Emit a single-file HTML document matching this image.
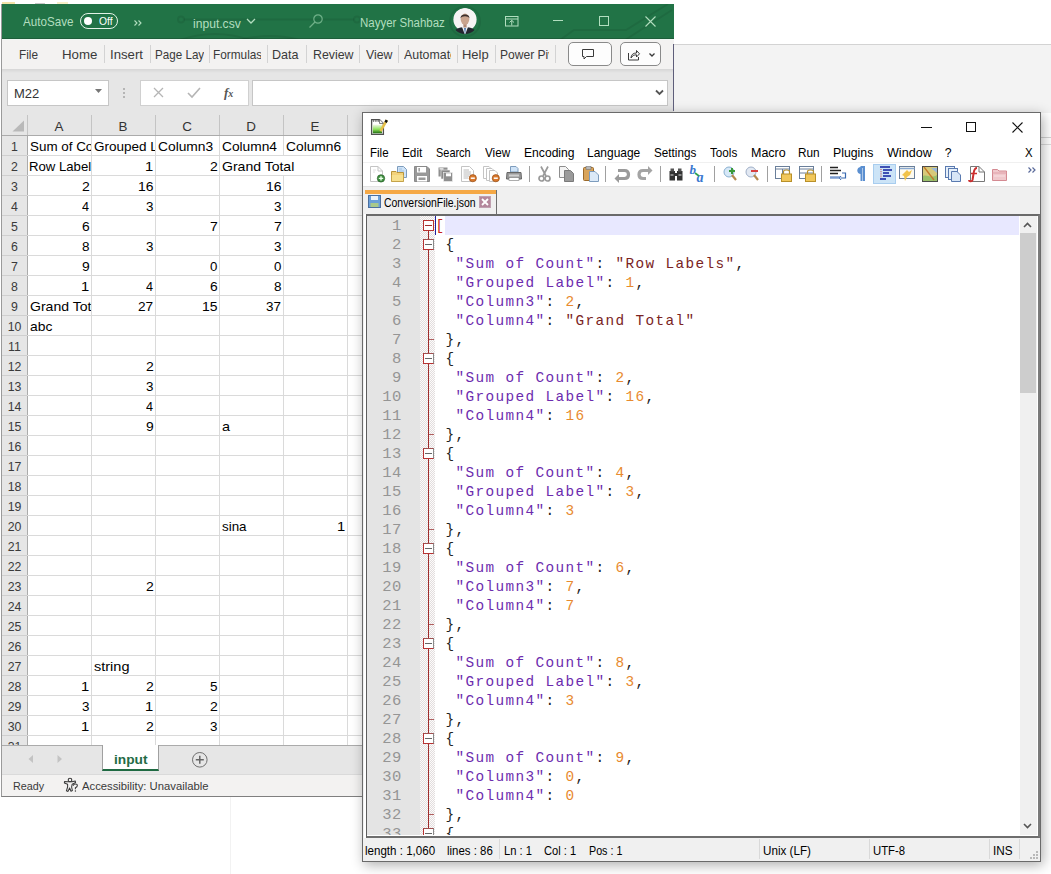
<!DOCTYPE html><html><head><meta charset="utf-8"><style>
*{box-sizing:border-box;margin:0;padding:0}
html,body{width:1051px;height:874px;overflow:hidden;background:#fff;font-family:"Liberation Sans",sans-serif;position:relative}
.a{position:absolute}
.t{position:absolute;white-space:nowrap;line-height:1}
svg{position:absolute;overflow:visible}
.cell{position:absolute;font-size:13.6px;color:#000;white-space:nowrap;line-height:20px;height:20px;overflow:hidden}
.rh{position:absolute;font-size:13.4px;color:#3a3a3a;text-align:center;line-height:20px;transform:scaleX(0.92)}
.code{position:absolute;font-family:"Liberation Mono",monospace;font-size:14.4px;letter-spacing:1.36px;line-height:19px;white-space:pre;color:#222}
.ln{position:absolute;font-family:"Liberation Mono",monospace;font-size:15.5px;letter-spacing:0.6px;line-height:19px;color:#959595;text-align:right;width:40px}
.k{color:#6c2cae}.s{color:#7a2424}.n{color:#e88a2e}
</style></head><body>
<div class="a" style="left:674px;top:44px;width:377px;height:69px;background:#f3f3f3;border-top:1px solid #d3d3d3"></div>
<div class="a" style="left:673px;top:44px;width:1px;height:67px;background:#5e5e7a;z-index:5"></div>
<div class="a" style="left:2px;top:2px;width:13px;height:2px;background:#f3e3a8"></div><div class="a" style="left:35px;top:3px;width:10px;height:1px;background:#c8c8c8"></div><div class="a" style="left:57px;top:2px;width:11px;height:2px;background:#f8f0c8"></div>
<div class="a" style="left:1041px;top:137px;width:10px;height:1px;background:#d4d4d4"></div><div class="a" style="left:1041px;top:144px;width:10px;height:1px;background:#dcdcdc"></div>
<div class="a" style="left:230px;top:797px;width:1px;height:77px;background:#f2f2f2"></div>
<div class="a" style="left:1px;top:4px;width:673px;height:793px;background:#e6e6e6;border-left:1px solid #9a9a9a;border-bottom:1px solid #7f7f7f;overflow:hidden">
<div class="a" style="left:0;top:0;width:673px;height:35px;background:#217346;border-bottom:1px solid #1d5e3a"></div>
<svg style="left:-1px;top:0" width="673" height="34" viewBox="1 4 673 34"><g fill="none" stroke="rgba(0,0,0,0.08)" stroke-width="2"><path d="M184 19.5 H354"/><circle cx="181" cy="19.5" r="3"/><circle cx="357" cy="19.5" r="3"/><circle cx="465" cy="21.5" r="15"/><path d="M560 40 L574 30 H626 L668 4"/><path d="M625 40 L672 10"/><path d="M180 40 Q215 28 250 40"/><path d="M240 40 Q270 32 300 40"/></g></svg>
<div class="t" style="left:21.00px;top:11.87px;font-size:12.2px;color:#b2debf;transform:scaleX(0.9542);transform-origin:0 0;">AutoSave</div>
<div class="a" style="left:78px;top:9px;width:38px;height:16px;border:1.5px solid #e3f2e7;border-radius:8px"></div>
<div class="a" style="left:82px;top:13px;width:8px;height:8px;border-radius:50%;background:#fff"></div>
<div class="t" style="left:96.53px;top:12.90px;font-size:10.4px;color:#ffffff;transform:scaleX(0.9955);transform-origin:0 0;">Off</div>
<svg style="left:132px;top:16px" width="9" height="6"><path d="M0.5 0.5 L3 3 L0.5 5.5 M4.5 0.5 L7 3 L4.5 5.5" fill="none" stroke="#b2debf" stroke-width="1.1"/></svg>
<div class="t" style="left:190.71px;top:13.80px;font-size:12.4px;color:#b2debf;transform:scaleX(0.9769);transform-origin:0 0;">input.csv</div>
<svg style="left:244px;top:14px" width="10" height="6"><path d="M1 1 L5 5 L9 1" fill="none" stroke="#b2debf" stroke-width="1.3"/></svg>
<svg style="left:306px;top:9px" width="16" height="16"><circle cx="10" cy="6" r="4.2" fill="none" stroke="#6fb088" stroke-width="1.2"/><path d="M7 9 L1.5 14.5" stroke="#6fb088" stroke-width="1.2"/></svg>
<div class="t" style="left:357.58px;top:12.94px;font-size:12px;color:#b2debf;transform:scaleX(0.9560);transform-origin:0 0;">Nayyer Shahbaz</div>
<svg style="left:449px;top:2px" width="28" height="30"><defs><clipPath id="av"><circle cx="14" cy="15" r="13"/></clipPath></defs><g clip-path="url(#av)"><circle cx="14" cy="13.5" r="11.6" fill="#f6f3f4"/><path d="M2 30 C2.5 23 7 21.2 14 21.2 C21 21.2 25.5 23 26 30Z" fill="#23272f"/><path d="M11 21 L14 29 L17 21Z" fill="#eef0f4"/><path d="M13.1 22 L14 29 L14.9 22Z" fill="#3e6ea8"/><rect x="12.4" y="18" width="3.2" height="3.5" fill="#b08a78"/><ellipse cx="14" cy="13.2" rx="4.3" ry="5.6" fill="#c9a48f"/><path d="M9.6 12.5 C9 7 19 7 18.4 12.5 C17.8 9.6 10.2 9.6 9.6 12.5Z" fill="#3a2e2c"/></g></svg>
<svg style="left:503px;top:12px" width="14" height="11"><rect x="0.5" y="0.5" width="12.5" height="9.5" fill="none" stroke="#b2debf" stroke-width="1"/><path d="M0.5 3 H13" stroke="#b2debf"/><path d="M6.75 9.5 V4.5 M4.5 6.5 L6.75 4.3 L9 6.5" fill="none" stroke="#b2debf"/></svg>
<div class="a" style="left:551px;top:16px;width:10px;height:1px;background:#b2debf"></div>
<div class="a" style="left:597px;top:12px;width:10px;height:10px;border:1px solid #b2debf"></div>
<svg style="left:643px;top:12px" width="11" height="11"><path d="M0.5 0.5 L10.5 10.5 M10.5 0.5 L0.5 10.5" stroke="#b2debf" stroke-width="1.1"/></svg>
<div class="a" style="left:0;top:35px;width:673px;height:30px;background:#f3f2f1;border-top:1px solid #eef8f2"></div>
<div class="a" style="left:0;top:65px;width:673px;height:4px;background:linear-gradient(#d6d6d6,#e6e6e6)"></div>
<div class="t" style="left:16.76px;top:44.67px;font-size:12.2px;color:#3a3a3a;transform:scaleX(0.9682);transform-origin:0 0;">File</div>
<div class="t" style="left:60.44px;top:44.67px;font-size:12.2px;color:#3a3a3a;transform:scaleX(1.0886);transform-origin:0 0;">Home</div>
<div class="t" style="left:108.01px;top:44.67px;font-size:12.2px;color:#3a3a3a;transform:scaleX(1.0816);transform-origin:0 0;">Insert</div>
<div class="a" style="left:0;top:0;width:202px;height:80px;overflow:hidden"><div class="t" style="left:152.87px;top:44.67px;font-size:12.2px;color:#3a3a3a;transform:scaleX(0.9552);transform-origin:0 0;">Page Layout</div></div>
<div class="a" style="left:0;top:0;width:259px;height:80px;overflow:hidden"><div class="t" style="left:211.45px;top:44.67px;font-size:12.2px;color:#3a3a3a;transform:scaleX(0.9703);transform-origin:0 0;">Formulas</div></div>
<div class="t" style="left:270.39px;top:44.67px;font-size:12.2px;color:#3a3a3a;transform:scaleX(1.0311);transform-origin:0 0;">Data</div>
<div class="t" style="left:310.61px;top:44.67px;font-size:12.2px;color:#3a3a3a;transform:scaleX(1.0143);transform-origin:0 0;">Review</div>
<div class="t" style="left:363.60px;top:44.67px;font-size:12.2px;color:#3a3a3a;transform:scaleX(1.0065);transform-origin:0 0;">View</div>
<div class="a" style="left:0;top:0;width:449px;height:80px;overflow:hidden"><div class="t" style="left:401.50px;top:44.67px;font-size:12.2px;color:#3a3a3a;transform:scaleX(1.0149);transform-origin:0 0;">Automate</div></div>
<div class="t" style="left:459.86px;top:44.67px;font-size:12.2px;color:#3a3a3a;transform:scaleX(1.0632);transform-origin:0 0;">Help</div>
<div class="a" style="left:0;top:0;width:547px;height:80px;overflow:hidden"><div class="t" style="left:497.53px;top:44.67px;font-size:12.2px;color:#3a3a3a;transform:scaleX(0.9905);transform-origin:0 0;">Power Pivot</div></div>
<div class="a" style="left:102px;top:41px;width:1px;height:18px;background:#d3d3d3"></div>
<div class="a" style="left:148px;top:41px;width:1px;height:18px;background:#d3d3d3"></div>
<div class="a" style="left:207px;top:41px;width:1px;height:18px;background:#d3d3d3"></div>
<div class="a" style="left:265px;top:41px;width:1px;height:18px;background:#d3d3d3"></div>
<div class="a" style="left:304px;top:41px;width:1px;height:18px;background:#d3d3d3"></div>
<div class="a" style="left:357px;top:41px;width:1px;height:18px;background:#d3d3d3"></div>
<div class="a" style="left:396px;top:41px;width:1px;height:18px;background:#d3d3d3"></div>
<div class="a" style="left:455px;top:41px;width:1px;height:18px;background:#d3d3d3"></div>
<div class="a" style="left:493px;top:41px;width:1px;height:18px;background:#d3d3d3"></div>
<div class="a" style="left:553px;top:41px;width:1px;height:18px;background:#d3d3d3"></div>
<div class="a" style="left:566px;top:38px;width:44px;height:24px;border:1px solid #8a8a8a;border-radius:5px;background:#fdfdfd"></div>
<svg style="left:580px;top:45px" width="12" height="11"><path d="M0.5 0.5 H11.5 V7.5 H4.5 L2 10 V7.5 H0.5Z" fill="none" stroke="#3a3a3a" stroke-width="1"/></svg>
<div class="a" style="left:618px;top:38px;width:41px;height:24px;border:1px solid #8a8a8a;border-radius:5px;background:#fdfdfd"></div>
<svg style="left:625px;top:44px" width="30" height="13"><path d="M1.5 5 V12 H11.5 V9" fill="none" stroke="#3a3a3a"/><path d="M4 10 C4 6.5 6.5 5 9.5 5 V2.5 L12.5 5.8 L9.5 9 V6.8 C7 6.8 5.3 7.8 4 10Z" fill="none" stroke="#3a3a3a" stroke-linejoin="round"/><path d="M22.5 5.5 L25 8 L27.5 5.5" fill="none" stroke="#3a3a3a" stroke-width="1.3"/></svg>
<div class="a" style="left:5px;top:76px;width:102px;height:26px;background:#fff;border:1px solid #c6c6c6"></div>
<div class="t" style="left:12px;top:83px;font-size:13px;color:#333">M22</div>
<svg style="left:93px;top:85px" width="8" height="5"><path d="M0 0 H7 L3.5 4Z" fill="#777"/></svg>
<div class="a" style="left:121px;top:84px;width:2px;height:2px;background:#b5b5b5"></div>
<div class="a" style="left:121px;top:88px;width:2px;height:2px;background:#b5b5b5"></div>
<div class="a" style="left:121px;top:92px;width:2px;height:2px;background:#b5b5b5"></div>
<div class="a" style="left:138px;top:76px;width:109px;height:26px;background:#fff;border:1px solid #d0d0d0"></div>
<svg style="left:151px;top:83px" width="11" height="11"><path d="M1 1 L10 10 M10 1 L1 10" stroke="#b5b5b5" stroke-width="1.3"/></svg>
<svg style="left:185px;top:83px" width="14" height="12"><path d="M1 6 L5 10 L13 1" fill="none" stroke="#b5b5b5" stroke-width="1.6"/></svg>
<div class="t" style="left:222px;top:82px;font-size:13px;color:#555;font-family:'Liberation Serif',serif;font-style:italic;font-weight:bold">f<span style="font-size:10px">x</span></div>
<div class="a" style="left:250px;top:76px;width:416px;height:26px;background:#fff;border:1px solid #c6c6c6"></div>
<svg style="left:653px;top:85px" width="10" height="7"><path d="M1 1.5 L4.5 5 L8 1.5" fill="none" stroke="#555" stroke-width="1.8"/></svg>
<div class="a" style="left:0;top:109px;width:673px;height:23px;background:#e6e6e6;border-bottom:1px solid #ababab"></div>
<svg style="left:10px;top:116px" width="13" height="12"><path d="M12 0.5 V11.5 H0.5Z" fill="#b9b9b9"/></svg>
<div class="t" style="left:25px;top:116px;width:64px;text-align:center;font-size:13.4px;color:#333">A</div>
<div class="t" style="left:89px;top:116px;width:64px;text-align:center;font-size:13.4px;color:#333">B</div>
<div class="t" style="left:153px;top:116px;width:64px;text-align:center;font-size:13.4px;color:#333">C</div>
<div class="t" style="left:217px;top:116px;width:64px;text-align:center;font-size:13.4px;color:#333">D</div>
<div class="t" style="left:281px;top:116px;width:64px;text-align:center;font-size:13.4px;color:#333">E</div>
<div class="t" style="left:345px;top:116px;width:64px;text-align:center;font-size:13.4px;color:#333">F</div>
<div class="a" style="left:25px;top:111px;width:1px;height:20px;background:#c4c4c4"></div>
<div class="a" style="left:89px;top:111px;width:1px;height:20px;background:#c4c4c4"></div>
<div class="a" style="left:153px;top:111px;width:1px;height:20px;background:#c4c4c4"></div>
<div class="a" style="left:217px;top:111px;width:1px;height:20px;background:#c4c4c4"></div>
<div class="a" style="left:281px;top:111px;width:1px;height:20px;background:#c4c4c4"></div>
<div class="a" style="left:345px;top:111px;width:1px;height:20px;background:#c4c4c4"></div>
<div class="a" style="left:409px;top:111px;width:1px;height:20px;background:#c4c4c4"></div>
<div class="a" style="left:25px;top:132px;width:650px;height:609px;background:#fff"></div>
<div class="a" style="left:0;top:132px;width:26px;height:609px;background:#e6e6e6;border-right:1px solid #ababab"></div>
<div class="rh" style="left:0;top:133px;width:25px;height:20px">1</div>
<div class="a" style="left:0;top:151px;width:25px;height:1px;background:#cfcfcf"></div>
<div class="a" style="left:25px;top:151px;width:650px;height:1px;background:#dadada"></div>
<div class="rh" style="left:0;top:153px;width:25px;height:20px">2</div>
<div class="a" style="left:0;top:171px;width:25px;height:1px;background:#cfcfcf"></div>
<div class="a" style="left:25px;top:171px;width:650px;height:1px;background:#dadada"></div>
<div class="rh" style="left:0;top:173px;width:25px;height:20px">3</div>
<div class="a" style="left:0;top:191px;width:25px;height:1px;background:#cfcfcf"></div>
<div class="a" style="left:25px;top:191px;width:650px;height:1px;background:#dadada"></div>
<div class="rh" style="left:0;top:193px;width:25px;height:20px">4</div>
<div class="a" style="left:0;top:211px;width:25px;height:1px;background:#cfcfcf"></div>
<div class="a" style="left:25px;top:211px;width:650px;height:1px;background:#dadada"></div>
<div class="rh" style="left:0;top:213px;width:25px;height:20px">5</div>
<div class="a" style="left:0;top:231px;width:25px;height:1px;background:#cfcfcf"></div>
<div class="a" style="left:25px;top:231px;width:650px;height:1px;background:#dadada"></div>
<div class="rh" style="left:0;top:233px;width:25px;height:20px">6</div>
<div class="a" style="left:0;top:251px;width:25px;height:1px;background:#cfcfcf"></div>
<div class="a" style="left:25px;top:251px;width:650px;height:1px;background:#dadada"></div>
<div class="rh" style="left:0;top:253px;width:25px;height:20px">7</div>
<div class="a" style="left:0;top:271px;width:25px;height:1px;background:#cfcfcf"></div>
<div class="a" style="left:25px;top:271px;width:650px;height:1px;background:#dadada"></div>
<div class="rh" style="left:0;top:273px;width:25px;height:20px">8</div>
<div class="a" style="left:0;top:291px;width:25px;height:1px;background:#cfcfcf"></div>
<div class="a" style="left:25px;top:291px;width:650px;height:1px;background:#dadada"></div>
<div class="rh" style="left:0;top:293px;width:25px;height:20px">9</div>
<div class="a" style="left:0;top:311px;width:25px;height:1px;background:#cfcfcf"></div>
<div class="a" style="left:25px;top:311px;width:650px;height:1px;background:#dadada"></div>
<div class="rh" style="left:0;top:313px;width:25px;height:20px">10</div>
<div class="a" style="left:0;top:331px;width:25px;height:1px;background:#cfcfcf"></div>
<div class="a" style="left:25px;top:331px;width:650px;height:1px;background:#dadada"></div>
<div class="rh" style="left:0;top:333px;width:25px;height:20px">11</div>
<div class="a" style="left:0;top:351px;width:25px;height:1px;background:#cfcfcf"></div>
<div class="a" style="left:25px;top:351px;width:650px;height:1px;background:#dadada"></div>
<div class="rh" style="left:0;top:353px;width:25px;height:20px">12</div>
<div class="a" style="left:0;top:371px;width:25px;height:1px;background:#cfcfcf"></div>
<div class="a" style="left:25px;top:371px;width:650px;height:1px;background:#dadada"></div>
<div class="rh" style="left:0;top:373px;width:25px;height:20px">13</div>
<div class="a" style="left:0;top:391px;width:25px;height:1px;background:#cfcfcf"></div>
<div class="a" style="left:25px;top:391px;width:650px;height:1px;background:#dadada"></div>
<div class="rh" style="left:0;top:393px;width:25px;height:20px">14</div>
<div class="a" style="left:0;top:411px;width:25px;height:1px;background:#cfcfcf"></div>
<div class="a" style="left:25px;top:411px;width:650px;height:1px;background:#dadada"></div>
<div class="rh" style="left:0;top:413px;width:25px;height:20px">15</div>
<div class="a" style="left:0;top:431px;width:25px;height:1px;background:#cfcfcf"></div>
<div class="a" style="left:25px;top:431px;width:650px;height:1px;background:#dadada"></div>
<div class="rh" style="left:0;top:433px;width:25px;height:20px">16</div>
<div class="a" style="left:0;top:451px;width:25px;height:1px;background:#cfcfcf"></div>
<div class="a" style="left:25px;top:451px;width:650px;height:1px;background:#dadada"></div>
<div class="rh" style="left:0;top:453px;width:25px;height:20px">17</div>
<div class="a" style="left:0;top:471px;width:25px;height:1px;background:#cfcfcf"></div>
<div class="a" style="left:25px;top:471px;width:650px;height:1px;background:#dadada"></div>
<div class="rh" style="left:0;top:473px;width:25px;height:20px">18</div>
<div class="a" style="left:0;top:491px;width:25px;height:1px;background:#cfcfcf"></div>
<div class="a" style="left:25px;top:491px;width:650px;height:1px;background:#dadada"></div>
<div class="rh" style="left:0;top:493px;width:25px;height:20px">19</div>
<div class="a" style="left:0;top:511px;width:25px;height:1px;background:#cfcfcf"></div>
<div class="a" style="left:25px;top:511px;width:650px;height:1px;background:#dadada"></div>
<div class="rh" style="left:0;top:513px;width:25px;height:20px">20</div>
<div class="a" style="left:0;top:531px;width:25px;height:1px;background:#cfcfcf"></div>
<div class="a" style="left:25px;top:531px;width:650px;height:1px;background:#dadada"></div>
<div class="rh" style="left:0;top:533px;width:25px;height:20px">21</div>
<div class="a" style="left:0;top:551px;width:25px;height:1px;background:#cfcfcf"></div>
<div class="a" style="left:25px;top:551px;width:650px;height:1px;background:#dadada"></div>
<div class="rh" style="left:0;top:553px;width:25px;height:20px">22</div>
<div class="a" style="left:0;top:571px;width:25px;height:1px;background:#cfcfcf"></div>
<div class="a" style="left:25px;top:571px;width:650px;height:1px;background:#dadada"></div>
<div class="rh" style="left:0;top:573px;width:25px;height:20px">23</div>
<div class="a" style="left:0;top:591px;width:25px;height:1px;background:#cfcfcf"></div>
<div class="a" style="left:25px;top:591px;width:650px;height:1px;background:#dadada"></div>
<div class="rh" style="left:0;top:593px;width:25px;height:20px">24</div>
<div class="a" style="left:0;top:611px;width:25px;height:1px;background:#cfcfcf"></div>
<div class="a" style="left:25px;top:611px;width:650px;height:1px;background:#dadada"></div>
<div class="rh" style="left:0;top:613px;width:25px;height:20px">25</div>
<div class="a" style="left:0;top:631px;width:25px;height:1px;background:#cfcfcf"></div>
<div class="a" style="left:25px;top:631px;width:650px;height:1px;background:#dadada"></div>
<div class="rh" style="left:0;top:633px;width:25px;height:20px">26</div>
<div class="a" style="left:0;top:651px;width:25px;height:1px;background:#cfcfcf"></div>
<div class="a" style="left:25px;top:651px;width:650px;height:1px;background:#dadada"></div>
<div class="rh" style="left:0;top:653px;width:25px;height:20px">27</div>
<div class="a" style="left:0;top:671px;width:25px;height:1px;background:#cfcfcf"></div>
<div class="a" style="left:25px;top:671px;width:650px;height:1px;background:#dadada"></div>
<div class="rh" style="left:0;top:673px;width:25px;height:20px">28</div>
<div class="a" style="left:0;top:691px;width:25px;height:1px;background:#cfcfcf"></div>
<div class="a" style="left:25px;top:691px;width:650px;height:1px;background:#dadada"></div>
<div class="rh" style="left:0;top:693px;width:25px;height:20px">29</div>
<div class="a" style="left:0;top:711px;width:25px;height:1px;background:#cfcfcf"></div>
<div class="a" style="left:25px;top:711px;width:650px;height:1px;background:#dadada"></div>
<div class="rh" style="left:0;top:713px;width:25px;height:20px">30</div>
<div class="a" style="left:0;top:731px;width:25px;height:1px;background:#cfcfcf"></div>
<div class="a" style="left:25px;top:731px;width:650px;height:1px;background:#dadada"></div>
<div class="rh" style="left:0;top:733px;width:25px;height:20px">31</div>
<div class="a" style="left:0;top:751px;width:25px;height:1px;background:#cfcfcf"></div>
<div class="a" style="left:25px;top:751px;width:650px;height:1px;background:#dadada"></div>
<div class="a" style="left:89px;top:132px;width:1px;height:609px;background:#dadada"></div>
<div class="a" style="left:153px;top:132px;width:1px;height:609px;background:#dadada"></div>
<div class="a" style="left:217px;top:132px;width:1px;height:609px;background:#dadada"></div>
<div class="a" style="left:281px;top:132px;width:1px;height:609px;background:#dadada"></div>
<div class="a" style="left:345px;top:132px;width:1px;height:609px;background:#dadada"></div>
<div class="a" style="left:409px;top:132px;width:1px;height:609px;background:#dadada"></div>
<div class="a" style="left:281px;top:152px;width:1px;height:19px;background:#fff"></div>
<div class="a" style="left:0;top:0;width:89px;height:800px;overflow:hidden"><div class="t" style="left:27.60px;top:136.33px;font-size:13.2px;color:#000;transform:scaleX(1.0163);transform-origin:0 0">Sum of Count</div></div>
<div class="a" style="left:0;top:0;width:153px;height:800px;overflow:hidden"><div class="t" style="left:91.52px;top:136.33px;font-size:13.2px;color:#000;transform:scaleX(1.0236);transform-origin:0 0">Grouped Label</div></div>
<div class="a" style="left:0;top:0;width:217px;height:800px;overflow:hidden"><div class="t" style="left:155.51px;top:136.33px;font-size:13.2px;color:#000;transform:scaleX(1.0457);transform-origin:0 0">Column3</div></div>
<div class="a" style="left:0;top:0;width:281px;height:800px;overflow:hidden"><div class="t" style="left:219.51px;top:136.33px;font-size:13.2px;color:#000;transform:scaleX(1.0417);transform-origin:0 0">Column4</div></div>
<div class="a" style="left:0;top:0;width:345px;height:800px;overflow:hidden"><div class="t" style="left:283.51px;top:136.33px;font-size:13.2px;color:#000;transform:scaleX(1.0457);transform-origin:0 0">Column6</div></div>
<div class="a" style="left:0;top:0;width:89px;height:800px;overflow:hidden"><div class="t" style="left:27.15px;top:156.33px;font-size:13.2px;color:#000;transform:scaleX(0.9976);transform-origin:0 0">Row Labels</div></div>
<div class="t" style="left:143.15px;top:156.33px;font-size:13.2px;color:#000;transform:scaleX(1.1212);transform-origin:0 0">1</div>
<div class="t" style="left:207.56px;top:156.33px;font-size:13.2px;color:#000;transform:scaleX(1.0602);transform-origin:0 0">2</div>
<div class="t" style="left:219.50px;top:156.33px;font-size:13.2px;color:#000;transform:scaleX(1.0642);transform-origin:0 0">Grand Total</div>
<div class="t" style="left:79.56px;top:176.33px;font-size:13.2px;color:#000;transform:scaleX(1.0602);transform-origin:0 0">2</div>
<div class="t" style="left:135.78px;top:176.33px;font-size:13.2px;color:#000;transform:scaleX(1.0564);transform-origin:0 0">16</div>
<div class="t" style="left:263.78px;top:176.33px;font-size:13.2px;color:#000;transform:scaleX(1.0564);transform-origin:0 0">16</div>
<div class="t" style="left:80.01px;top:196.33px;font-size:13.2px;color:#000;transform:scaleX(0.9563);transform-origin:0 0">4</div>
<div class="t" style="left:143.79px;top:196.33px;font-size:13.2px;color:#000;transform:scaleX(1.0160);transform-origin:0 0">3</div>
<div class="t" style="left:271.79px;top:196.33px;font-size:13.2px;color:#000;transform:scaleX(1.0160);transform-origin:0 0">3</div>
<div class="t" style="left:79.57px;top:216.33px;font-size:13.2px;color:#000;transform:scaleX(1.0488);transform-origin:0 0">6</div>
<div class="t" style="left:207.56px;top:216.33px;font-size:13.2px;color:#000;transform:scaleX(1.0602);transform-origin:0 0">7</div>
<div class="t" style="left:271.56px;top:216.33px;font-size:13.2px;color:#000;transform:scaleX(1.0602);transform-origin:0 0">7</div>
<div class="t" style="left:79.72px;top:236.33px;font-size:13.2px;color:#000;transform:scaleX(1.0267);transform-origin:0 0">8</div>
<div class="t" style="left:143.79px;top:236.33px;font-size:13.2px;color:#000;transform:scaleX(1.0160);transform-origin:0 0">3</div>
<div class="t" style="left:271.79px;top:236.33px;font-size:13.2px;color:#000;transform:scaleX(1.0160);transform-origin:0 0">3</div>
<div class="t" style="left:79.64px;top:256.33px;font-size:13.2px;color:#000;transform:scaleX(1.0488);transform-origin:0 0">9</div>
<div class="t" style="left:207.80px;top:256.33px;font-size:13.2px;color:#000;transform:scaleX(1.0056);transform-origin:0 0">0</div>
<div class="t" style="left:271.80px;top:256.33px;font-size:13.2px;color:#000;transform:scaleX(1.0056);transform-origin:0 0">0</div>
<div class="t" style="left:79.15px;top:276.33px;font-size:13.2px;color:#000;transform:scaleX(1.1212);transform-origin:0 0">1</div>
<div class="t" style="left:144.01px;top:276.33px;font-size:13.2px;color:#000;transform:scaleX(0.9563);transform-origin:0 0">4</div>
<div class="t" style="left:207.57px;top:276.33px;font-size:13.2px;color:#000;transform:scaleX(1.0488);transform-origin:0 0">6</div>
<div class="t" style="left:271.72px;top:276.33px;font-size:13.2px;color:#000;transform:scaleX(1.0267);transform-origin:0 0">8</div>
<div class="a" style="left:0;top:0;width:89px;height:800px;overflow:hidden"><div class="t" style="left:27.50px;top:296.33px;font-size:13.2px;color:#000;transform:scaleX(1.0642);transform-origin:0 0">Grand Total</div></div>
<div class="t" style="left:136.14px;top:296.33px;font-size:13.2px;color:#000;transform:scaleX(1.0356);transform-origin:0 0">27</div>
<div class="t" style="left:199.78px;top:296.33px;font-size:13.2px;color:#000;transform:scaleX(1.0564);transform-origin:0 0">15</div>
<div class="t" style="left:264.35px;top:296.33px;font-size:13.2px;color:#000;transform:scaleX(1.0205);transform-origin:0 0">37</div>
<div class="a" style="left:0;top:0;width:89px;height:800px;overflow:hidden"><div class="t" style="left:27.65px;top:316.33px;font-size:13.2px;color:#000;transform:scaleX(1.0510);transform-origin:0 0">abc</div></div>
<div class="t" style="left:143.56px;top:356.33px;font-size:13.2px;color:#000;transform:scaleX(1.0602);transform-origin:0 0">2</div>
<div class="t" style="left:143.79px;top:376.33px;font-size:13.2px;color:#000;transform:scaleX(1.0160);transform-origin:0 0">3</div>
<div class="t" style="left:144.01px;top:396.33px;font-size:13.2px;color:#000;transform:scaleX(0.9563);transform-origin:0 0">4</div>
<div class="t" style="left:143.64px;top:416.33px;font-size:13.2px;color:#000;transform:scaleX(1.0488);transform-origin:0 0">9</div>
<div class="a" style="left:0;top:0;width:281px;height:800px;overflow:hidden"><div class="t" style="left:219.62px;top:416.33px;font-size:13.2px;color:#000;transform:scaleX(1.0966);transform-origin:0 0">a</div></div>
<div class="a" style="left:0;top:0;width:281px;height:800px;overflow:hidden"><div class="t" style="left:219.86px;top:516.33px;font-size:13.2px;color:#000;transform:scaleX(1.0153);transform-origin:0 0">sina</div></div>
<div class="t" style="left:335.15px;top:516.33px;font-size:13.2px;color:#000;transform:scaleX(1.1212);transform-origin:0 0">1</div>
<div class="t" style="left:143.56px;top:576.33px;font-size:13.2px;color:#000;transform:scaleX(1.0602);transform-origin:0 0">2</div>
<div class="a" style="left:0;top:0;width:153px;height:800px;overflow:hidden"><div class="t" style="left:91.84px;top:656.33px;font-size:13.2px;color:#000;transform:scaleX(1.0992);transform-origin:0 0">string</div></div>
<div class="t" style="left:79.15px;top:676.33px;font-size:13.2px;color:#000;transform:scaleX(1.1212);transform-origin:0 0">1</div>
<div class="t" style="left:143.56px;top:676.33px;font-size:13.2px;color:#000;transform:scaleX(1.0602);transform-origin:0 0">2</div>
<div class="t" style="left:207.72px;top:676.33px;font-size:13.2px;color:#000;transform:scaleX(1.0267);transform-origin:0 0">5</div>
<div class="t" style="left:79.79px;top:696.33px;font-size:13.2px;color:#000;transform:scaleX(1.0160);transform-origin:0 0">3</div>
<div class="t" style="left:143.15px;top:696.33px;font-size:13.2px;color:#000;transform:scaleX(1.1212);transform-origin:0 0">1</div>
<div class="t" style="left:207.56px;top:696.33px;font-size:13.2px;color:#000;transform:scaleX(1.0602);transform-origin:0 0">2</div>
<div class="t" style="left:79.15px;top:716.33px;font-size:13.2px;color:#000;transform:scaleX(1.1212);transform-origin:0 0">1</div>
<div class="t" style="left:143.56px;top:716.33px;font-size:13.2px;color:#000;transform:scaleX(1.0602);transform-origin:0 0">2</div>
<div class="t" style="left:207.79px;top:716.33px;font-size:13.2px;color:#000;transform:scaleX(1.0160);transform-origin:0 0">3</div>
<div class="a" style="left:0;top:741px;width:673px;height:29px;background:#e6e6e6;border-top:1px solid #ababab"></div>
<svg style="left:26px;top:751px" width="6" height="9"><path d="M5 0 V8 L0.5 4Z" fill="#c3c3c3"/></svg>
<svg style="left:55px;top:751px" width="6" height="9"><path d="M0.5 0 V8 L5 4Z" fill="#c3c3c3"/></svg>
<div class="a" style="left:100px;top:741px;width:57px;height:26px;background:#fff;border-left:1px solid #a0a0a0;border-right:1px solid #a0a0a0;border-bottom:2px solid #1f6a42"></div>
<div class="t" style="left:111.61px;top:749.10px;font-size:13px;color:#236b45;font-weight:bold;transform:scaleX(1.0549);transform-origin:0 0;">input</div>
<svg style="left:189px;top:747px" width="18" height="18"><circle cx="8.8" cy="8.8" r="7.3" fill="none" stroke="#707070" stroke-width="1"/><path d="M8.8 4.8 V12.8 M4.8 8.8 H12.8" stroke="#666" stroke-width="1.5"/></svg>
<div class="a" style="left:0;top:770px;width:673px;height:22px;background:#f3f2f1;border-top:1px solid #dadada"></div>
<div class="t" style="left:10.74px;top:776.89px;font-size:11px;color:#3a3a3a;transform:scaleX(0.9803);transform-origin:0 0;">Ready</div>
<svg style="left:60px;top:772px" width="18" height="18"><circle cx="8" cy="4" r="1.8" fill="none" stroke="#3a3a3a" stroke-width="1.1"/><path d="M2.5 5.5 L6 5.8 H10 L13.2 5 L13.6 6.5 L10.2 8.2 L9.6 11 L10.4 14.5 L9 15.2 L7.6 12 L6 15.4 L4.4 14.8 L5.6 11 L5.6 8.2 L2.4 7Z" fill="none" stroke="#3a3a3a" stroke-width="1.05" stroke-linejoin="round"/><path d="M11.3 9.8 Q11.4 8 13.4 8 Q15.4 8 15.3 9.8 Q15.2 11 13.4 11.8 V13.3" fill="none" stroke="#3a3a3a" stroke-width="1.1"/><circle cx="13.4" cy="15" r="0.7" fill="#3a3a3a"/></svg>
<div class="t" style="left:80.40px;top:776.89px;font-size:11px;color:#3a3a3a;transform:scaleX(1.0241);transform-origin:0 0;">Accessibility: Unavailable</div>
</div>
<div class="a" style="left:362px;top:112px;width:679px;height:750px;background:#f0f0f0;border:1px solid #6a6a6a;box-shadow:2px 3px 12px rgba(0,0,0,.32);overflow:hidden">
<div class="a" style="left:0;top:0;width:677px;height:50px;background:#fff"></div>
<svg style="left:7px;top:5px" width="18" height="18"><defs><linearGradient id="ng" x1="0" y1="0" x2="0" y2="1"><stop offset="0" stop-color="#f4f8ea"/><stop offset="0.55" stop-color="#8ee25a"/><stop offset="1" stop-color="#1f6a10"/></linearGradient></defs><path d="M1.6 1.6 H9.5 L13.4 5.5 V16.4 H1.6Z" fill="#fff" stroke="#505050" stroke-width="1.3"/><path d="M9.5 1.6 V5.5 H13.4" fill="#f4f4f4" stroke="#666" stroke-width="0.8"/><circle cx="3.6" cy="3" r="0.8" fill="#444"/><circle cx="5.9" cy="3" r="0.8" fill="#444"/><circle cx="8.2" cy="3" r="0.8" fill="#444"/><rect x="2.8" y="6.5" width="9.2" height="8.8" fill="url(#ng)"/><path d="M16.8 2.2 L10.5 13.2" stroke="#e6c048" stroke-width="2.6"/><path d="M16.8 2.2 L15.6 4.3" stroke="#111" stroke-width="2.6"/></svg>
<div class="a" style="left:558px;top:14px;width:11px;height:1px;background:#111"></div>
<div class="a" style="left:603px;top:9px;width:10px;height:10px;border:1px solid #111"></div>
<svg style="left:649px;top:9px" width="11" height="11"><path d="M0.5 0.5 L10.5 10.5 M10.5 0.5 L0.5 10.5" stroke="#111" stroke-width="1.1"/></svg>
<div class="t" style="left:6.88px;top:33.87px;font-size:12.2px;color:#000;transform:scaleX(0.9462);transform-origin:0 0;">File</div>
<div class="t" style="left:38.76px;top:33.87px;font-size:12.2px;color:#000;transform:scaleX(0.9646);transform-origin:0 0;">Edit</div>
<div class="t" style="left:73.21px;top:33.87px;font-size:12.2px;color:#000;transform:scaleX(0.8974);transform-origin:0 0;">Search</div>
<div class="t" style="left:122.10px;top:33.87px;font-size:12.2px;color:#000;transform:scaleX(0.9607);transform-origin:0 0;">View</div>
<div class="t" style="left:160.53px;top:33.87px;font-size:12.2px;color:#000;transform:scaleX(0.9946);transform-origin:0 0;">Encoding</div>
<div class="t" style="left:223.94px;top:33.87px;font-size:12.2px;color:#000;transform:scaleX(0.9825);transform-origin:0 0;">Language</div>
<div class="t" style="left:291.07px;top:33.87px;font-size:12.2px;color:#000;transform:scaleX(0.9600);transform-origin:0 0;">Settings</div>
<div class="t" style="left:346.77px;top:33.87px;font-size:12.2px;color:#000;transform:scaleX(0.9599);transform-origin:0 0;">Tools</div>
<div class="t" style="left:387.50px;top:33.87px;font-size:12.2px;color:#000;transform:scaleX(1.0250);transform-origin:0 0;">Macro</div>
<div class="t" style="left:435.06px;top:33.87px;font-size:12.2px;color:#000;transform:scaleX(0.9672);transform-origin:0 0;">Run</div>
<div class="t" style="left:470.02px;top:33.87px;font-size:12.2px;color:#000;transform:scaleX(1.0074);transform-origin:0 0;">Plugins</div>
<div class="t" style="left:523.70px;top:33.87px;font-size:12.2px;color:#000;transform:scaleX(1.0315);transform-origin:0 0;">Window</div>
<div class="t" style="left:581.81px;top:33.87px;font-size:12.2px;color:#000;">?</div>
<div class="t" style="left:662.47px;top:33.87px;font-size:12.2px;color:#000;transform:scaleX(0.9368);transform-origin:0 0;">X</div>
<div class="a" style="left:0;top:49px;width:677px;height:25px;background:#fff;border-top:1px solid #f0f0f0;border-bottom:1px solid #e3e3e3"></div>
<svg style="left:6px;top:53px" width="16" height="16"><path d="M1.5 0.5 H9 L13.5 5 V15.5 H1.5Z" fill="#fff" stroke="#c4c4c4"/><path d="M9 0.5 V5 H13.5" fill="none" stroke="#c4c4c4"/><path d="M4 4 H7 M4 6 H6" stroke="#e0e0e0"/><circle cx="12" cy="12.4" r="3.7" fill="#3f8f3f" stroke="#2a5f2a" stroke-width="0.7"/><path d="M12 10.2 V14.6 M9.8 12.4 H14.2" stroke="#e8ffe8" stroke-width="1.4"/></svg>
<svg style="left:28px;top:53px" width="16" height="16"><path d="M6.5 0.5 H12.5 L15.5 3.5 V11.5 H6.5Z" fill="#cfe3f7" stroke="#7d9cbd"/><path d="M8 3 H11 M8 5 H13 M8 7 H13" stroke="#9fc0e0"/><path d="M0.5 5.5 H5 L6 6.5 H12.5 V15.5 H0.5Z" fill="#f3d27a" stroke="#b8943a"/><path d="M0.8 9 H12.2 V15.2 H0.8Z" fill="#f7e08f"/></svg>
<svg style="left:51px;top:53px" width="16" height="16"><path d="M0.5 0.5 H13 L15.5 3 V15.5 H0.5Z" fill="#999" stroke="#8a8a8a"/><rect x="3" y="1" width="9" height="5.5" fill="#fff"/><rect x="4.5" y="2" width="1.3" height="3.5" fill="#8c8c8c"/><rect x="3" y="10" width="10" height="5.5" fill="#fff"/><rect x="4.5" y="11.5" width="7" height="2.5" fill="#9a9a9a"/></svg>
<svg style="left:75px;top:54px" width="15" height="15"><rect x="0.5" y="0.5" width="9" height="9" fill="#8f8f8f"/><rect x="3" y="3" width="9" height="9" fill="#8a8a8a" stroke="#f4f4f4" stroke-width="0.6"/><rect x="5.5" y="5.5" width="9" height="9" fill="#8f8f8f" stroke="#f4f4f4" stroke-width="0.6"/><rect x="8" y="6.3" width="5" height="3" fill="#fff"/><rect x="1.5" y="1.3" width="4" height="1.2" fill="#fff"/></svg>
<svg style="left:98px;top:53px" width="16" height="16"><path d="M0.5 0.5 H8.5 L12.5 4.5 V15.5 H0.5Z" fill="#fff" stroke="#c4c4c4"/><path d="M2.5 4 H8 M2.5 6 H10 M2.5 8 H10 M2.5 10 H8 M2.5 12 H7" stroke="#a8a8a8" stroke-width="0.8"/><circle cx="11.8" cy="12.2" r="3.6" fill="#d9782c" stroke="#9a4f16" stroke-width="0.7"/><path d="M9.8 12.2 H13.8" stroke="#fff" stroke-width="1.5"/></svg>
<svg style="left:120px;top:53px" width="17" height="16"><path d="M0.5 0.5 H6 L8.5 3 V12.5 H0.5Z" fill="#fff" stroke="#c4c4c4"/><path d="M3.5 2.5 H9 L11.5 5 V14.5 H3.5Z" fill="#fff" stroke="#c4c4c4"/><path d="M6.5 4.5 H12 L14.5 7 V15.5 H6.5Z" fill="#fff" stroke="#c4c4c4"/><circle cx="12.8" cy="12.2" r="3.6" fill="#d9782c" stroke="#9a4f16" stroke-width="0.7"/><path d="M10.8 12.2 H14.8" stroke="#fff" stroke-width="1.5"/></svg>
<svg style="left:143px;top:53px" width="16" height="15"><path d="M4.5 0.5 H10 L12 2.5 V6 H4.5Z" fill="#cfe3f7" stroke="#7d9cbd"/><path d="M1 6.5 H15 L15.5 13 H0.5Z" fill="#9a9a9a" stroke="#666"/><rect x="3" y="8.5" width="10" height="2" fill="#d0d0d0"/><rect x="3" y="11.5" width="10" height="3" fill="#fff" stroke="#777" stroke-width="0.6"/></svg>
<svg style="left:175px;top:53px" width="13" height="16"><path d="M3 0.5 L8 10 M10 0.5 L5 10" stroke="#9a9a9a" stroke-width="1.7"/><circle cx="3.5" cy="12.5" r="2.5" fill="none" stroke="#9a9a9a" stroke-width="1.7"/><circle cx="9.5" cy="12.5" r="2.5" fill="none" stroke="#9a9a9a" stroke-width="1.7"/></svg>
<svg style="left:196px;top:53px" width="16" height="16"><path d="M0.5 0.5 H6.5 L9.5 3.5 V11.5 H0.5Z" fill="#f4f4f4" stroke="#8e8e8e"/><path d="M5.5 4.5 H11.5 L14.5 7.5 V15.5 H5.5Z" fill="#9a9a9a" stroke="#7a7a7a"/></svg>
<svg style="left:220px;top:53px" width="16" height="16"><rect x="0.5" y="1.5" width="10" height="13" rx="1" fill="#d9a45a" stroke="#9b6a2a"/><rect x="3" y="0.5" width="5" height="3" fill="#b8b8b8" stroke="#777" stroke-width="0.6"/><path d="M6.5 5.5 H12 L15.5 9 V15.5 H6.5Z" fill="#dceaf8" stroke="#7d9cbd"/></svg>
<svg style="left:251px;top:55px" width="16" height="13"><path d="M4 2.5 H10.5 C13.5 2.5 14.5 4.5 14.5 6.5 C14.5 8.5 13.5 10.5 10.5 10.5 H2" fill="none" stroke="#9a9a9a" stroke-width="3.2"/><path d="M0.5 10.5 L5 6 V15Z" fill="#9a9a9a"/></svg>
<svg style="left:275px;top:55px" width="15" height="13"><path d="M11 2.5 H5 C2 2.5 1 4.5 1 6.5 C1 8.5 2 10.5 5 10.5 H8" fill="none" stroke="#a4a4a4" stroke-width="3.2"/><path d="M14.5 2.5 L10 -2 V7Z" fill="#a4a4a4"/></svg>
<svg style="left:306px;top:55px" width="14" height="13"><rect x="0.5" y="3" width="5.5" height="9.5" fill="#333"/><rect x="8" y="3" width="5.5" height="9.5" fill="#333"/><rect x="5" y="5" width="4" height="3" fill="#333"/><rect x="1.5" y="0.5" width="3.5" height="3" fill="#555"/><rect x="9" y="0.5" width="3.5" height="3" fill="#555"/><rect x="1.5" y="6" width="3" height="2" fill="#888"/><rect x="9.5" y="6" width="3" height="2" fill="#888"/></svg>
<svg style="left:326px;top:51px" width="20" height="19"><text x="0.5" y="10" font-family="Liberation Serif" font-style="italic" font-weight="bold" font-size="13" fill="#3a78d0">b</text><text x="7.5" y="17.5" font-family="Liberation Serif" font-style="italic" font-weight="bold" font-size="14" fill="#3a78d0">a</text><path d="M6 9 L10 12" stroke="#30a050" stroke-width="1.6"/></svg>
<svg style="left:360px;top:53px" width="14" height="16"><circle cx="6" cy="6" r="5" fill="#d6e8f7" stroke="#8ab0d0"/><path d="M9 9 L13 14" stroke="#b48a50" stroke-width="2.2"/><path d="M9 2 V8 M6 5 H12" stroke="#3a9a3a" stroke-width="2"/></svg>
<svg style="left:382px;top:53px" width="14" height="16"><circle cx="6" cy="6" r="5" fill="#e2e8f2" stroke="#a0b0c8"/><path d="M9 9 L13 14" stroke="#b48a50" stroke-width="2.2"/><path d="M6 5 H13" stroke="#d84040" stroke-width="2"/></svg>
<svg style="left:412px;top:53px" width="18" height="16"><rect x="0.5" y="0.5" width="14" height="12" fill="#fff" stroke="#6a7f9a"/><path d="M0.5 3 H14.5 M7.5 3 V12.5" stroke="#6a7f9a"/><rect x="6.5" y="8" width="10" height="7.5" fill="#f1c75a" stroke="#b8902a"/><path d="M8.5 8 V5.5 C8.5 3.5 14.5 3.5 14.5 5.5 V8" fill="none" stroke="#b8902a" stroke-width="1.2"/></svg>
<svg style="left:436px;top:53px" width="18" height="16"><rect x="0.5" y="0.5" width="14" height="12" fill="#fff" stroke="#6a7f9a"/><path d="M0.5 3 H14.5 M0.5 7 H14.5" stroke="#6a7f9a"/><rect x="6.5" y="8" width="10" height="7.5" fill="#f1c75a" stroke="#b8902a"/><path d="M8.5 8 V5.5 C8.5 3.5 14.5 3.5 14.5 5.5 V8" fill="none" stroke="#b8902a" stroke-width="1.2"/></svg>
<svg style="left:467px;top:53px" width="17" height="15"><path d="M0 1.5 H8 M0 4.5 H11 M0 7.5 H8" stroke="#222" stroke-width="1.3"/><path d="M0 11.5 H10" stroke="#7a9bd0" stroke-width="2.5"/><path d="M12 7 H15.5 V12 H11" fill="none" stroke="#3a6ab0" stroke-width="1.2"/><path d="M11 10 L9.5 12 L11 14" fill="none" stroke="#3a6ab0"/></svg>
<svg style="left:493px;top:53px" width="10" height="16"><path d="M4.5 1 H9 M5.5 1 V15 M8 1 V15" stroke="#5b8fd0" stroke-width="2"/><path d="M5 1 C0 1 0 8 5 8Z" fill="#5b8fd0"/></svg>
<svg style="left:536px;top:53px" width="16" height="16"><rect x="0.5" y="0.5" width="15" height="12" fill="#fdfaf0" stroke="#6a7f9a"/><path d="M0.5 2.5 H15.5" stroke="#8aa8d0" stroke-width="1.5"/><path d="M3 9 L8 4 L10 6 L13 4 L11 9 L8 11 L6 15 L5 10Z" fill="#f1c34a"/></svg>
<svg style="left:559px;top:53px" width="16" height="16"><rect x="0.5" y="0.5" width="15" height="15" fill="#d7c97a" stroke="#4a4a4a"/><path d="M1 10 C5 8 9 13 15 9 V15 H1Z" fill="#9ac06a"/><path d="M2 1 L12 14" stroke="#c47a2a" stroke-width="1.3"/><path d="M9 2 H15 V7" fill="#9ab8d8"/></svg>
<svg style="left:582px;top:53px" width="16" height="16"><rect x="0.5" y="0.5" width="9" height="11" fill="#e6f0fa" stroke="#5a7ab0"/><rect x="3.5" y="2.5" width="9" height="11" fill="#e6f0fa" stroke="#5a7ab0"/><path d="M6.5 5.5 H12 L15.5 9 V15.5 H6.5Z" fill="#d8e6f6" stroke="#5a7ab0"/></svg>
<svg style="left:605px;top:53px" width="17" height="16"><path d="M2.5 0.5 H11 L16.5 6 V15.5 H2.5Z" fill="#fff" stroke="#777"/><path d="M11 0.5 V6 H16.5" fill="none" stroke="#777"/><path d="M9 2 C6 2 6 5 5.5 8 L4.5 14 C4 16 1 15.5 1 14" fill="none" stroke="#cc3030" stroke-width="2"/><path d="M3 7.5 H9" stroke="#cc3030" stroke-width="1.5"/></svg>
<svg style="left:629px;top:55px" width="15" height="13"><path d="M0.5 1.5 H5.5 L7 3 H14.5 V12.5 H0.5Z" fill="#f0c8cc" stroke="#d48a92"/><path d="M0.5 5 H14.5" stroke="#e0a0a8"/><path d="M2 8 H13" stroke="#f8e0e2"/></svg>
<div class="a" style="left:166px;top:53px;width:1px;height:16px;background:#a0a0a0"></div>
<div class="a" style="left:242px;top:53px;width:1px;height:16px;background:#a0a0a0"></div>
<div class="a" style="left:297px;top:53px;width:1px;height:16px;background:#a0a0a0"></div>
<div class="a" style="left:351px;top:53px;width:1px;height:16px;background:#a0a0a0"></div>
<div class="a" style="left:404px;top:53px;width:1px;height:16px;background:#a0a0a0"></div>
<div class="a" style="left:458px;top:53px;width:1px;height:16px;background:#a0a0a0"></div>
<div class="a" style="left:510px;top:51px;width:23px;height:20px;background:#cce4f7;border:1px solid #a8cdef"></div>
<svg style="left:514px;top:53px" width="16" height="16"><path d="M3 1 H13 M6 4 H15 M6 7 H12 M6 10 H14 M3 13 H9" stroke="#1020a0" stroke-width="1.6"/><path d="M4 3 V12" stroke="#c04040" stroke-width="1" stroke-dasharray="1 1.2"/></svg>
<svg style="left:665px;top:54px" width="9" height="6"><path d="M0.5 0.5 L3 3 L0.5 5.5 M4.5 0.5 L7 3 L4.5 5.5" fill="none" stroke="#5a6a9a" stroke-width="1.2"/></svg>
<div class="a" style="left:2px;top:77px;width:132px;height:24px;background:#f0f0f0;border-right:1px solid #6e6e6e"></div>
<div class="a" style="left:2px;top:77px;width:131px;height:4px;background:#f5a845"></div>
<svg style="left:5px;top:82px" width="14" height="14"><rect x="0.5" y="0.5" width="12" height="12" fill="#6a9fd8" stroke="#4a6fa0"/><rect x="3" y="1" width="7" height="4" fill="#eaf2fb"/><rect x="2.5" y="8" width="8" height="4" fill="#a9c98a"/></svg>
<div class="t" style="left:21.18px;top:83.87px;font-size:12.2px;color:#000;transform:scaleX(0.8565);transform-origin:0 0;">ConversionFile.json</div>
<svg style="left:116px;top:83px" width="12" height="12"><rect x="0" y="0" width="12" height="12" fill="#c0a0b0"/><rect x="1" y="1" width="10" height="10" fill="#b4879c"/><path d="M3 3 L9 9 M9 3 L3 9" stroke="#fff" stroke-width="1.8"/></svg>
<div class="a" style="left:1px;top:101px;width:2px;height:624px;background:#fff"></div>
<div class="a" style="left:3px;top:101px;width:674px;height:624px;background:#fff;border-top:2px solid #6a6a6a;border-left:1px solid #5e5e5e;border-right:2px solid #7a7a7a;border-bottom:2px solid #6e6e6e"></div>
<div class="a" style="left:4px;top:103px;width:53px;height:619px;background:#e4e4e4"></div>
<div class="a" style="left:57px;top:103px;width:15px;height:619px;background-color:#f6f6f6;background-image:repeating-conic-gradient(#e2dede 0 25%,#fdfbfb 0 50%);background-size:2px 2px"></div>
<div class="a" style="left:82px;top:103px;width:574px;height:19px;background:#e8e8ff"></div>
<div class="a" style="left:72px;top:103px;width:1px;height:19px;background:#2020a0"></div>
<div class="a" style="left:3px;top:103px;width:653px;height:619px;overflow:hidden">
<div class="ln" style="left:-4px;top:1px">1</div>
<div class="code" style="left:69.5px;top:1px"><span style="color:#c81e1e">[</span></div>
<div class="ln" style="left:-4px;top:20px">2</div>
<div class="code" style="left:69.5px;top:20px"> {</div>
<div class="ln" style="left:-4px;top:39px">3</div>
<div class="code" style="left:69.5px;top:39px">  <span class="k">&quot;Sum of Count&quot;</span>: <span class="s">&quot;Row Labels&quot;</span>,</div>
<div class="ln" style="left:-4px;top:58px">4</div>
<div class="code" style="left:69.5px;top:58px">  <span class="k">&quot;Grouped Label&quot;</span>: <span class="n">1</span>,</div>
<div class="ln" style="left:-4px;top:77px">5</div>
<div class="code" style="left:69.5px;top:77px">  <span class="k">&quot;Column3&quot;</span>: <span class="n">2</span>,</div>
<div class="ln" style="left:-4px;top:96px">6</div>
<div class="code" style="left:69.5px;top:96px">  <span class="k">&quot;Column4&quot;</span>: <span class="s">&quot;Grand Total&quot;</span></div>
<div class="ln" style="left:-4px;top:115px">7</div>
<div class="code" style="left:69.5px;top:115px"> },</div>
<div class="ln" style="left:-4px;top:134px">8</div>
<div class="code" style="left:69.5px;top:134px"> {</div>
<div class="ln" style="left:-4px;top:153px">9</div>
<div class="code" style="left:69.5px;top:153px">  <span class="k">&quot;Sum of Count&quot;</span>: <span class="n">2</span>,</div>
<div class="ln" style="left:-4px;top:172px">10</div>
<div class="code" style="left:69.5px;top:172px">  <span class="k">&quot;Grouped Label&quot;</span>: <span class="n">16</span>,</div>
<div class="ln" style="left:-4px;top:191px">11</div>
<div class="code" style="left:69.5px;top:191px">  <span class="k">&quot;Column4&quot;</span>: <span class="n">16</span></div>
<div class="ln" style="left:-4px;top:210px">12</div>
<div class="code" style="left:69.5px;top:210px"> },</div>
<div class="ln" style="left:-4px;top:229px">13</div>
<div class="code" style="left:69.5px;top:229px"> {</div>
<div class="ln" style="left:-4px;top:248px">14</div>
<div class="code" style="left:69.5px;top:248px">  <span class="k">&quot;Sum of Count&quot;</span>: <span class="n">4</span>,</div>
<div class="ln" style="left:-4px;top:267px">15</div>
<div class="code" style="left:69.5px;top:267px">  <span class="k">&quot;Grouped Label&quot;</span>: <span class="n">3</span>,</div>
<div class="ln" style="left:-4px;top:286px">16</div>
<div class="code" style="left:69.5px;top:286px">  <span class="k">&quot;Column4&quot;</span>: <span class="n">3</span></div>
<div class="ln" style="left:-4px;top:305px">17</div>
<div class="code" style="left:69.5px;top:305px"> },</div>
<div class="ln" style="left:-4px;top:324px">18</div>
<div class="code" style="left:69.5px;top:324px"> {</div>
<div class="ln" style="left:-4px;top:343px">19</div>
<div class="code" style="left:69.5px;top:343px">  <span class="k">&quot;Sum of Count&quot;</span>: <span class="n">6</span>,</div>
<div class="ln" style="left:-4px;top:362px">20</div>
<div class="code" style="left:69.5px;top:362px">  <span class="k">&quot;Column3&quot;</span>: <span class="n">7</span>,</div>
<div class="ln" style="left:-4px;top:381px">21</div>
<div class="code" style="left:69.5px;top:381px">  <span class="k">&quot;Column4&quot;</span>: <span class="n">7</span></div>
<div class="ln" style="left:-4px;top:400px">22</div>
<div class="code" style="left:69.5px;top:400px"> },</div>
<div class="ln" style="left:-4px;top:419px">23</div>
<div class="code" style="left:69.5px;top:419px"> {</div>
<div class="ln" style="left:-4px;top:438px">24</div>
<div class="code" style="left:69.5px;top:438px">  <span class="k">&quot;Sum of Count&quot;</span>: <span class="n">8</span>,</div>
<div class="ln" style="left:-4px;top:457px">25</div>
<div class="code" style="left:69.5px;top:457px">  <span class="k">&quot;Grouped Label&quot;</span>: <span class="n">3</span>,</div>
<div class="ln" style="left:-4px;top:476px">26</div>
<div class="code" style="left:69.5px;top:476px">  <span class="k">&quot;Column4&quot;</span>: <span class="n">3</span></div>
<div class="ln" style="left:-4px;top:495px">27</div>
<div class="code" style="left:69.5px;top:495px"> },</div>
<div class="ln" style="left:-4px;top:514px">28</div>
<div class="code" style="left:69.5px;top:514px"> {</div>
<div class="ln" style="left:-4px;top:533px">29</div>
<div class="code" style="left:69.5px;top:533px">  <span class="k">&quot;Sum of Count&quot;</span>: <span class="n">9</span>,</div>
<div class="ln" style="left:-4px;top:552px">30</div>
<div class="code" style="left:69.5px;top:552px">  <span class="k">&quot;Column3&quot;</span>: <span class="n">0</span>,</div>
<div class="ln" style="left:-4px;top:571px">31</div>
<div class="code" style="left:69.5px;top:571px">  <span class="k">&quot;Column4&quot;</span>: <span class="n">0</span></div>
<div class="ln" style="left:-4px;top:590px">32</div>
<div class="code" style="left:69.5px;top:590px"> },</div>
<div class="ln" style="left:-4px;top:609px">33</div>
<div class="code" style="left:69.5px;top:609px"> {</div>
<div class="a" style="left:62px;top:14px;width:1px;height:620px;background:#a02c2c"></div>
<div class="a" style="left:57px;top:4px;width:11px;height:11px;background:#fff;border:1px solid #b83232;"></div>
<div class="a" style="left:59px;top:9px;width:7px;height:1px;background:#a02a2a"></div>
<div class="a" style="left:57px;top:23px;width:11px;height:11px;background:#fff;border:1px solid #b83232;border-right-color:#8a8a8a;border-top-color:#a05050;"></div>
<div class="a" style="left:59px;top:28px;width:7px;height:1px;background:#666"></div>
<div class="a" style="left:63px;top:123px;width:5px;height:1px;background:#b06060"></div>
<div class="a" style="left:57px;top:137px;width:11px;height:11px;background:#fff;border:1px solid #b83232;border-right-color:#8a8a8a;border-top-color:#a05050;"></div>
<div class="a" style="left:59px;top:142px;width:7px;height:1px;background:#666"></div>
<div class="a" style="left:63px;top:218px;width:5px;height:1px;background:#b06060"></div>
<div class="a" style="left:57px;top:232px;width:11px;height:11px;background:#fff;border:1px solid #b83232;border-right-color:#8a8a8a;border-top-color:#a05050;"></div>
<div class="a" style="left:59px;top:237px;width:7px;height:1px;background:#666"></div>
<div class="a" style="left:63px;top:313px;width:5px;height:1px;background:#b06060"></div>
<div class="a" style="left:57px;top:327px;width:11px;height:11px;background:#fff;border:1px solid #b83232;border-right-color:#8a8a8a;border-top-color:#a05050;"></div>
<div class="a" style="left:59px;top:332px;width:7px;height:1px;background:#666"></div>
<div class="a" style="left:63px;top:408px;width:5px;height:1px;background:#b06060"></div>
<div class="a" style="left:57px;top:422px;width:11px;height:11px;background:#fff;border:1px solid #b83232;border-right-color:#8a8a8a;border-top-color:#a05050;"></div>
<div class="a" style="left:59px;top:427px;width:7px;height:1px;background:#666"></div>
<div class="a" style="left:63px;top:503px;width:5px;height:1px;background:#b06060"></div>
<div class="a" style="left:57px;top:517px;width:11px;height:11px;background:#fff;border:1px solid #b83232;border-right-color:#8a8a8a;border-top-color:#a05050;"></div>
<div class="a" style="left:59px;top:522px;width:7px;height:1px;background:#666"></div>
<div class="a" style="left:63px;top:598px;width:5px;height:1px;background:#b06060"></div>
<div class="a" style="left:57px;top:612px;width:11px;height:11px;background:#fff;border:1px solid #b83232;border-right-color:#8a8a8a;border-top-color:#a05050;"></div>
<div class="a" style="left:59px;top:617px;width:7px;height:1px;background:#666"></div>
</div>
<div class="a" style="left:657px;top:103px;width:17px;height:619px;background:#f0f0f0"></div>
<svg style="left:660px;top:109px" width="10" height="6"><path d="M1 5 L4.5 1.5 L8 5" fill="none" stroke="#555" stroke-width="1.6"/></svg>
<div class="a" style="left:657px;top:120px;width:16px;height:160px;background:#cdcdcd"></div>
<svg style="left:660px;top:710px" width="10" height="6"><path d="M1 1 L4.5 4.5 L8 1" fill="none" stroke="#555" stroke-width="1.6"/></svg>
<div class="a" style="left:0;top:725px;width:677px;height:23px;background:#f0f0f0"></div>
<div class="t" style="left:2.05px;top:731.77px;font-size:12.2px;color:#000;transform:scaleX(0.9489);transform-origin:0 0;">length : 1,060</div>
<div class="t" style="left:83.76px;top:731.77px;font-size:12.2px;color:#000;transform:scaleX(0.9386);transform-origin:0 0;">lines : 86</div>
<div class="t" style="left:140.70px;top:731.77px;font-size:12.2px;color:#000;transform:scaleX(0.9180);transform-origin:0 0;">Ln : 1</div>
<div class="t" style="left:181.34px;top:731.77px;font-size:12.2px;color:#000;transform:scaleX(0.9150);transform-origin:0 0;">Col : 1</div>
<div class="t" style="left:225.94px;top:731.77px;font-size:12.2px;color:#000;transform:scaleX(0.8787);transform-origin:0 0;">Pos : 1</div>
<div class="t" style="left:400.42px;top:731.77px;font-size:12.2px;color:#000;transform:scaleX(0.9577);transform-origin:0 0;">Unix (LF)</div>
<div class="t" style="left:510.35px;top:731.77px;font-size:12.2px;color:#000;transform:scaleX(0.9299);transform-origin:0 0;">UTF-8</div>
<div class="t" style="left:629.94px;top:731.77px;font-size:12.2px;color:#000;transform:scaleX(0.9612);transform-origin:0 0;">INS</div>
<div class="a" style="left:673px;top:738px;width:2px;height:2px;background:#b8b8b8"></div>
<div class="a" style="left:670px;top:741px;width:2px;height:2px;background:#b8b8b8"></div>
<div class="a" style="left:673px;top:741px;width:2px;height:2px;background:#b8b8b8"></div>
<div class="a" style="left:667px;top:744px;width:2px;height:2px;background:#b8b8b8"></div>
<div class="a" style="left:670px;top:744px;width:2px;height:2px;background:#b8b8b8"></div>
<div class="a" style="left:673px;top:744px;width:2px;height:2px;background:#b8b8b8"></div>
<div class="a" style="left:136px;top:726px;width:1px;height:20px;background:#d9d9d9"></div>
<div class="a" style="left:396px;top:726px;width:1px;height:20px;background:#d9d9d9"></div>
<div class="a" style="left:506px;top:726px;width:1px;height:20px;background:#d9d9d9"></div>
<div class="a" style="left:626px;top:726px;width:1px;height:20px;background:#d9d9d9"></div>
<div class="a" style="left:656px;top:726px;width:1px;height:20px;background:#d9d9d9"></div>
</div>
</body></html>
